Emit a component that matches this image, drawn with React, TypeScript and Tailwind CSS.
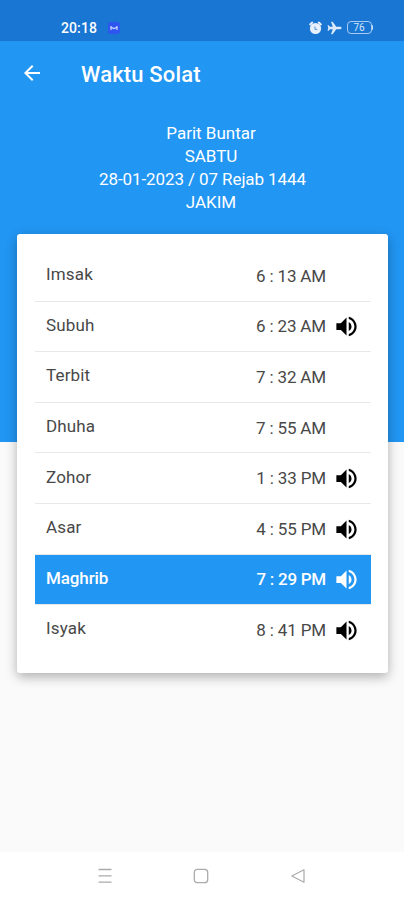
import { MdArrowBack, MdVolumeUp } from "react-icons/md";

type prayerType = {
	name: string;
	time: string;
	sound: boolean;
	active?: boolean;
};

const prayers: prayerType[] = [
	{ name: "Imsak", time: "6 : 13 AM", sound: false },
	{ name: "Subuh", time: "6 : 23 AM", sound: true },
	{ name: "Terbit", time: "7 : 32 AM", sound: false },
	{ name: "Dhuha", time: "7 : 55 AM", sound: false },
	{ name: "Zohor", time: "1 : 33 PM", sound: true },
	{ name: "Asar", time: "4 : 55 PM", sound: true },
	{ name: "Maghrib", time: "7 : 29 PM", sound: true, active: true },
	{ name: "Isyak", time: "8 : 41 PM", sound: true },
];

function StatusBar() {
	return (
		<div className="h-[41px] bg-[#1976d2] flex items-center justify-between pl-[61px] pr-[31px] pt-[14px] text-white">
			<div className="flex items-center gap-[11px]">
				<span className="text-[14px] leading-none font-medium tracking-[0.1px]">20:18</span>
				<svg width="12" height="12" viewBox="0 0 12 12">
					<rect width="12" height="12" rx="3" fill="#2f55f0" />
					<path d="M3 4v4M9 4v4M3 5.2l3 1.4 3-1.4" fill="none" stroke="#cfdcff" strokeWidth="1.2" />
				</svg>
			</div>
			<div className="flex items-center">
				<svg width="13" height="14" viewBox="0 0 13 14" className="mr-[5px]">
					<path d="M1.2 3.4 3.2 1.6M11.8 3.4 9.8 1.6" stroke="#e8f1fb" strokeWidth="2" strokeLinecap="round" />
					<circle cx="6.5" cy="7.5" r="5.6" fill="#e8f1fb" />
					<path d="M6 5.4v2.6l2.2.8" fill="none" stroke="#5b9be0" strokeWidth="1.1" />
				</svg>
				<svg width="15" height="14" viewBox="0 0 15 14" className="mr-[5px]" fill="#dceafa">
					<path d="M14.5 7c0-.8-.6-1.2-1.4-1.2H9.3L5.6.8H4l1.8 5H3L1.6 4.2H.5L1.3 7 .5 9.8h1.1L3 8.2h2.8l-1.8 5h1.6l3.7-5h3.8c.8 0 1.4-.4 1.4-1.2z" />
				</svg>
				<div className="flex items-center">
					<div className="w-[25px] h-[13px] rounded-[4px] border-[1.5px] border-[#a9cbef] flex items-center justify-center text-[10px] leading-none text-[#d5e6f8]">
						76
					</div>
					<div className="w-[1.5px] h-[5px] rounded-r bg-[#c4dbf3]" />
				</div>
			</div>
		</div>
	);
}

function PrayerRow({ name, time, sound, active }: prayerType) {
	return (
		<li
			className={
				active
					? "h-[50.6px] pl-[11px] pr-[11px] flex items-center bg-[#2196f3] text-white font-medium border-b border-[#e8e8e8]"
					: "h-[50.6px] pl-[11px] pr-[11px] flex items-center text-[#484848] border-b border-[#e8e8e8] last:border-transparent"
			}
		>
			<span className={active ? "flex-1 -tracking-[0.1px] pb-[2px]" : "flex-1 tracking-[0.15px] pb-[2px]"}>{name}</span>
			<span className={active ? "-tracking-[0.25px] pt-[1px]" : "-tracking-[0.15px] pt-[1px]"}>{time}</span>
			<span className="w-[27px] ml-[7px] pt-[1px]">
				{sound && <MdVolumeUp className={active ? "size-[27px] text-white" : "size-[27px] text-black"} />}
			</span>
		</li>
	);
}

function NavigationBar() {
	return (
		<nav className="h-[48px] bg-white flex items-center justify-between pl-[97px] pr-[98px]">
			<svg width="16" height="16" viewBox="0 0 16 16" stroke="#ababab" strokeWidth="1.3">
				<path d="M1.5 1.5h13M1.5 7.8h13M1.5 14.2h13" />
			</svg>
			<svg width="16" height="16" viewBox="0 0 16 16" fill="none" stroke="#ababab" strokeWidth="1.3" className="mr-[1px]">
				<rect x="1.3" y="1.3" width="13.4" height="13.4" rx="3" />
			</svg>
			<svg width="16" height="16" viewBox="0 0 16 16" fill="none" stroke="#ababab" strokeWidth="1.2" strokeLinejoin="round">
				<path d="M14 1.8v12.4L1.8 8z" />
			</svg>
		</nav>
	);
}

function App() {
	return (
		<div className="w-[404px] h-[900px] flex flex-col overflow-hidden bg-[#fafafa] font-[Roboto,sans-serif]">
			<StatusBar />
			<section className="h-[401px] shrink-0 bg-[#2196f3] text-white">
				<header className="h-[65px] flex items-center pl-[20px]">
					<MdArrowBack className="size-[24px] mb-[2px]" />
					<h1 className="ml-[37px] pt-[2px] text-[22px] leading-none font-medium tracking-[0.15px]">Waktu Solat</h1>
				</header>
				<div className="pt-[16px] pl-[18px] text-center text-[17px] leading-[23px]">
					<p>Parit Buntar</p>
					<p>SABTU</p>
					<p className="pr-[17px] -tracking-[0.1px]">28-01-2023 / 07 Rejab 1444</p>
					<p>JAKIM</p>
				</div>
			</section>
			<main className="flex-1 -mt-[208px] px-4">
				<ul className="ml-[1px] h-[439px] rounded-[3px] bg-white pt-[17px] pl-[18px] pr-[17px] text-[17px] leading-none shadow-[0_4px_12px_rgba(0,0,0,0.3)]">
					{prayers.map((prayer) => (
						<PrayerRow key={prayer.name} {...prayer} />
					))}
				</ul>
			</main>
			<NavigationBar />
		</div>
	);
}

export default App;
